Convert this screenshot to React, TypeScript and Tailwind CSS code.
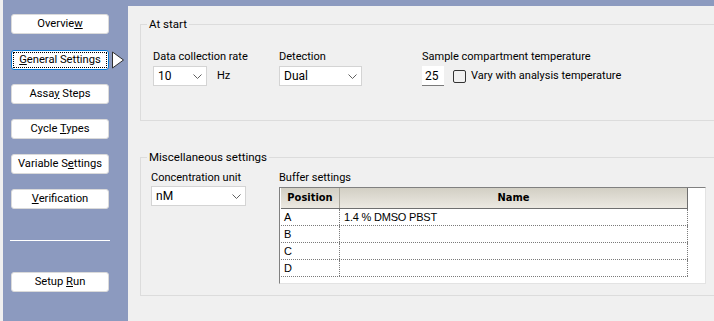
import { ReactNode } from 'react'

const UI = { fontFamily: 'Roboto, "Liberation Sans", sans-serif' }
const GRID = { fontFamily: '"Liberation Sans", Arial, sans-serif' }
const HEAD = { fontFamily: '"DejaVu Sans Condensed", "DejaVu Sans", sans-serif' }

function Chevron() {
  return (
    <svg width="9" height="5" viewBox="0 0 9 5" className="shrink-0">
      <path d="M0.5 0.5 L4.5 4.5 L8.5 0.5" fill="none" stroke="#606060" strokeWidth="1" />
    </svg>
  )
}

function Select({ value, width }: { value: string; width: string }) {
  return (
    <div className={`flex h-[20px] items-center justify-between border border-[#d4d4d4] bg-white pl-[4px] pr-[4px] ${width}`}>
      <span className="text-[12px] leading-none text-black">{value}</span>
      <Chevron />
    </div>
  )
}

function NavButton({ children, active = false }: { children: ReactNode; active?: boolean }) {
  return (
    <div
      className={`flex h-[20px] w-[98px] items-center justify-center rounded-[3px] bg-white text-[11.2px] text-black ${
        active ? 'border border-[#0078d7]' : 'border border-[#dadada]'
      }`}
    >
      {active ? (
        <div className="flex h-[16px] w-[94px] items-center justify-center border border-dotted border-black">
          <span>{children}</span>
        </div>
      ) : (
        <span>{children}</span>
      )}
    </div>
  )
}

const rows = [
  { pos: 'A', name: '1.4 % DMSO PBST' },
  { pos: 'B', name: '' },
  { pos: 'C', name: '' },
  { pos: 'D', name: '' },
]

export default function App() {
  return (
    <div className="flex h-[321px] w-[714px] overflow-hidden bg-[#8c9abf]" style={UI}>
      <div className="w-[3px] shrink-0 bg-[#f0f0f0]" />

      {/* side navigation */}
      <div className="flex w-[125px] shrink-0 flex-col pl-[8px] pt-[14px]">
        <NavButton>
          Overvie<u>w</u>
        </NavButton>
        <div className="mt-[16px] flex items-center gap-[2px]">
          <NavButton active>
            <u>G</u>eneral Settings
          </NavButton>
          <svg width="14" height="18" viewBox="0 0 14 18">
            <path d="M1.5 1 L12.5 9 L1.5 17 Z" fill="white" stroke="#303030" strokeWidth="1" />
          </svg>
        </div>
        <div className="mt-[14px]">
          <NavButton>
            Assa<u>y</u> Steps
          </NavButton>
        </div>
        <div className="mt-[15px]">
          <NavButton>
            Cycle <u>T</u>ypes
          </NavButton>
        </div>
        <div className="mt-[15px]">
          <NavButton>
            Variable S<u>e</u>ttings
          </NavButton>
        </div>
        <div className="mt-[15px]">
          <NavButton>
            <u>V</u>erification
          </NavButton>
        </div>
        <div className="ml-[-1px] mt-[31px] h-px w-[100px] bg-white" />
        <div className="mt-[31px]">
          <NavButton>
            Setup <u>R</u>un
          </NavButton>
        </div>
      </div>

      {/* main panel */}
      <div className="mt-[6px] flex-1 overflow-hidden bg-[#f0f0f0] pl-[12px] pt-[10px] text-[11px] text-black">
        <fieldset className="h-[105px] w-[620px] border border-[#dcdcdc]">
          <legend className="ml-[6px] px-[2px] text-[11.5px] leading-[16px]">At start</legend>
          <div className="flex pl-[12px] pt-[17px]">
            <div className="w-[126px]">
              <div className="leading-[16px]">Data collection rate</div>
              <div className="mt-px flex items-center gap-[10px]">
                <Select value="10" width="w-[54px]" />
                <span>Hz</span>
              </div>
            </div>
            <div className="w-[143px]">
              <div className="leading-[16px]">Detection</div>
              <div className="mt-px">
                <Select value="Dual" width="w-[83px]" />
              </div>
            </div>
            <div>
              <div className="leading-[16px]">Sample compartment temperature</div>
              <div className="mt-px flex items-center">
                <div className="flex h-[20px] w-[22px] items-center border-b border-[#7a7a7a] bg-white pl-[3px] text-[12px]">25</div>
                <div className="ml-[9px] h-[13px] w-[13px] rounded-[2px] border border-[#333333]" />
                <span className="ml-[5px]">Vary with analysis temperature</span>
              </div>
            </div>
          </div>
        </fieldset>

        <fieldset className="mt-[28px] h-[147px] w-[620px] border border-[#dcdcdc]">
          <legend className="ml-[6px] px-[2px] text-[11.5px] leading-[16px]">Miscellaneous settings</legend>
          <div className="flex pl-[10px] pt-[5px]">
            <div className="w-[128px]">
              <div className="leading-[16px]">Concentration unit</div>
              <Select value="nM" width="w-[95px]" />
            </div>
            <div>
              <div className="leading-[16px]">Buffer settings</div>
              <div className="mt-px h-[97px] w-[427px] border border-b-[#e3e3e3] border-l-[#808080] border-r-[#e3e3e3] border-t-[#808080] bg-white pl-px">
                <div className="flex h-[21px] w-[407px] border-b border-[#6f6f6f] bg-gradient-to-b from-[#d2cfc4] to-[#ece9e2]" style={HEAD}>
                  <div className="flex w-[59px] items-center justify-center border-r border-[#a9a69b] text-[11px] font-bold">
                    Position
                  </div>
                  <div className="flex flex-1 items-center justify-center border-r border-[#6f6f6f] text-[11px] font-bold">
                    Name
                  </div>
                </div>
                {rows.map((r) => (
                  <div key={r.pos} className="flex h-[17px] w-[407px] border-b border-dotted border-[#7a7a7a] text-[11px] tracking-[-0.2px]" style={GRID}>
                    <div className="flex w-[59px] items-center border-r border-dotted border-[#7a7a7a] pl-[3px]">{r.pos}</div>
                    <div className="flex flex-1 items-center border-r border-dotted border-[#7a7a7a] pl-[4px]">{r.name}</div>
                  </div>
                ))}
              </div>
            </div>
          </div>
        </fieldset>
      </div>
    </div>
  )
}
